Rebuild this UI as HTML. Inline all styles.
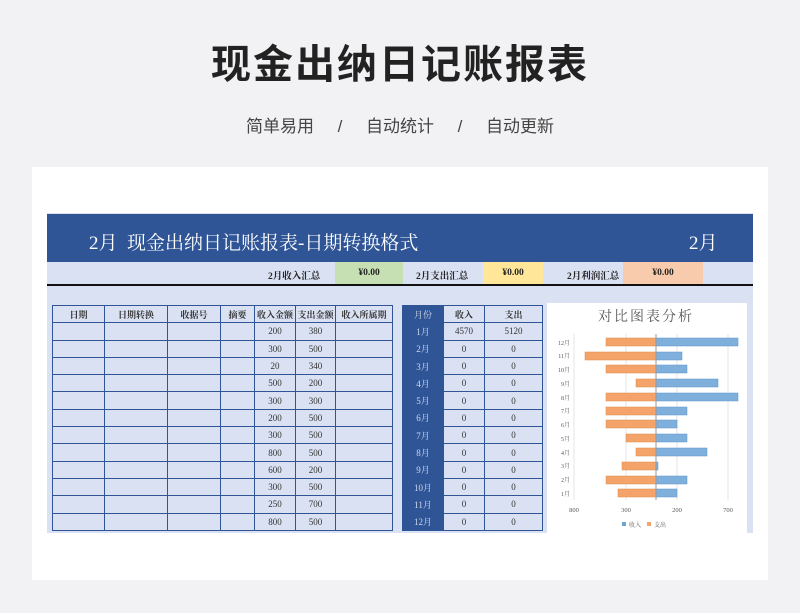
<!DOCTYPE html>
<html><head><meta charset="utf-8"><style>
*{margin:0;padding:0;box-sizing:border-box}
body{width:800px;height:613px;background:#f2f2f4;font-family:"Liberation Serif","Noto Serif CJK SC",serif;position:relative;overflow:hidden}
.abs{position:absolute}
h1{position:absolute;top:32px;width:800px;text-align:center;font:bold 40px "Liberation Sans","Noto Sans CJK SC",sans-serif;color:#222;letter-spacing:2px}
.sub{position:absolute;top:112px;width:800px;text-align:center;font:17px "Liberation Sans","Noto Sans CJK SC",sans-serif;color:#444;word-spacing:0}
.card{left:32px;top:167px;width:736px;height:413px;background:#fff}
.sheet{left:47px;top:213px;width:706px;height:320px;background:#d9e1f2}
.tb{left:47px;top:214px;width:706px;height:48px;background:#2f5597;color:#fff;font-size:19px}
table{border-collapse:collapse;position:absolute;font-size:9px;text-align:center}
td{border:1px solid #2f5597;height:17.3px;padding:0;color:#333}
.m td.d{background:#2f5597;color:#cfd8ea}
</style></head><body>
<h1>现金出纳日记账报表</h1>
<div class="sub">简单易用&nbsp;&nbsp;&nbsp;&nbsp;&nbsp;/&nbsp;&nbsp;&nbsp;&nbsp;&nbsp;自动统计&nbsp;&nbsp;&nbsp;&nbsp;&nbsp;/&nbsp;&nbsp;&nbsp;&nbsp;&nbsp;自动更新</div>
<div class="abs card"></div>
<div class="abs sheet"></div>
<div class="abs tb"><span class="abs" style="left:42px;top:14px">2月&nbsp;&nbsp;现金出纳日记账报表-日期转换格式</span><span class="abs" style="left:642px;top:14px">2月</span></div>
<div class="abs" style="left:47px;top:284px;width:706px;height:2px;background:#111"></div>
<div class="abs" style="top:262px;left:0;height:22px;font-size:9.5px;font-weight:bold;color:#222;width:800px">
<span class="abs" style="left:268px;top:6px">2月收入汇总</span>
<div class="abs" style="left:335px;top:0;width:68px;height:22px;background:#c6e0b4;text-align:center;line-height:22px">¥0.00</div>
<span class="abs" style="left:416px;top:6px">2月支出汇总</span>
<div class="abs" style="left:483px;top:0;width:60px;height:22px;background:#ffe699;text-align:center;line-height:22px">¥0.00</div>
<span class="abs" style="left:567px;top:6px">2月利润汇总</span>
<div class="abs" style="left:623px;top:0;width:80px;height:22px;background:#f8cbad;text-align:center;line-height:22px">¥0.00</div>
</div>
<table style="left:52px;top:305px;width:341px">
<tr style="font-weight:bold"><td style="width:52px">日期</td><td style="width:63px">日期转换</td><td style="width:53px">收据号</td><td style="width:34px">摘要</td><td style="width:41px">收入金额</td><td style="width:40px">支出金额</td><td>收入所属期</td></tr>
<tr><td></td><td></td><td></td><td></td><td>200</td><td>380</td><td></td></tr>
<tr><td></td><td></td><td></td><td></td><td>300</td><td>500</td><td></td></tr>
<tr><td></td><td></td><td></td><td></td><td>20</td><td>340</td><td></td></tr>
<tr><td></td><td></td><td></td><td></td><td>500</td><td>200</td><td></td></tr>
<tr><td></td><td></td><td></td><td></td><td>300</td><td>300</td><td></td></tr>
<tr><td></td><td></td><td></td><td></td><td>200</td><td>500</td><td></td></tr>
<tr><td></td><td></td><td></td><td></td><td>300</td><td>500</td><td></td></tr>
<tr><td></td><td></td><td></td><td></td><td>800</td><td>500</td><td></td></tr>
<tr><td></td><td></td><td></td><td></td><td>600</td><td>200</td><td></td></tr>
<tr><td></td><td></td><td></td><td></td><td>300</td><td>500</td><td></td></tr>
<tr><td></td><td></td><td></td><td></td><td>250</td><td>700</td><td></td></tr>
<tr><td></td><td></td><td></td><td></td><td>800</td><td>500</td><td></td></tr>
</table>
<table class="m" style="left:402px;top:305px;width:141px">
<tr><td class="d" style="width:41px">月份</td><td style="width:41px;font-weight:bold">收入</td><td style="font-weight:bold">支出</td></tr>
<tr><td class="d">1月</td><td>4570</td><td>5120</td></tr>
<tr><td class="d">2月</td><td>0</td><td>0</td></tr>
<tr><td class="d">3月</td><td>0</td><td>0</td></tr>
<tr><td class="d">4月</td><td>0</td><td>0</td></tr>
<tr><td class="d">5月</td><td>0</td><td>0</td></tr>
<tr><td class="d">6月</td><td>0</td><td>0</td></tr>
<tr><td class="d">7月</td><td>0</td><td>0</td></tr>
<tr><td class="d">8月</td><td>0</td><td>0</td></tr>
<tr><td class="d">9月</td><td>0</td><td>0</td></tr>
<tr><td class="d">10月</td><td>0</td><td>0</td></tr>
<tr><td class="d">11月</td><td>0</td><td>0</td></tr>
<tr><td class="d">12月</td><td>0</td><td>0</td></tr>
</table>
<svg class="abs" style="left:547px;top:303px" width="200" height="230" viewBox="547 303 200 230" font-family="Liberation Serif,Noto Serif CJK SC,serif">
<rect x="547" y="303" width="200" height="230" fill="#fff"/>
<text x="646" y="321" font-size="14" fill="#595959" text-anchor="middle" letter-spacing="2">对比图表分析</text>
<g stroke="#e4e4e4"><line x1="574" y1="334" x2="574" y2="500"/><line x1="626" y1="334" x2="626" y2="500"/><line x1="677" y1="334" x2="677" y2="500"/><line x1="728" y1="334" x2="728" y2="500"/></g>
<g fill="#f4a46a" stroke="#e08a4c" stroke-width=".5">
<rect x="606" y="338" width="50" height="8"/><rect x="585" y="352" width="71" height="8"/><rect x="606" y="365" width="50" height="8"/><rect x="636" y="379" width="20" height="8"/><rect x="606" y="393" width="50" height="8"/><rect x="606" y="407" width="50" height="8"/><rect x="606" y="420" width="50" height="8"/><rect x="626" y="434" width="30" height="8"/><rect x="636" y="448" width="20" height="8"/><rect x="622" y="462" width="34" height="8"/><rect x="606" y="476" width="50" height="8"/><rect x="618" y="489" width="38" height="8"/></g>
<g fill="#7fb0dc" stroke="#5a95cc" stroke-width=".5">
<rect x="656" y="338" width="82" height="8"/><rect x="656" y="352" width="26" height="8"/><rect x="656" y="365" width="31" height="8"/><rect x="656" y="379" width="62" height="8"/><rect x="656" y="393" width="82" height="8"/><rect x="656" y="407" width="31" height="8"/><rect x="656" y="420" width="21" height="8"/><rect x="656" y="434" width="31" height="8"/><rect x="656" y="448" width="51" height="8"/><rect x="656" y="462" width="2" height="8"/><rect x="656" y="476" width="31" height="8"/><rect x="656" y="489" width="21" height="8"/></g>
<line x1="656" y1="334" x2="656" y2="500" stroke="#999"/>
<g font-size="6" fill="#595959" text-anchor="end">
<text x="570" y="345">12月</text><text x="570" y="358">11月</text><text x="570" y="372">10月</text><text x="570" y="386">9月</text><text x="570" y="400">8月</text><text x="570" y="413">7月</text><text x="570" y="427">6月</text><text x="570" y="441">5月</text><text x="570" y="455">4月</text><text x="570" y="468">3月</text><text x="570" y="482">2月</text><text x="570" y="496">1月</text></g>
<g font-size="6.5" fill="#595959" text-anchor="middle"><text x="574" y="512">800</text><text x="626" y="512">300</text><text x="677" y="512">200</text><text x="728" y="512">700</text></g>
<rect x="622" y="522" width="4" height="4" fill="#6fa3d6"/><text x="629" y="527" font-size="6" fill="#595959">收入</text>
<rect x="647" y="522" width="4" height="4" fill="#f4a46a"/><text x="654" y="527" font-size="6" fill="#595959">支出</text>
</svg>
</body></html>
